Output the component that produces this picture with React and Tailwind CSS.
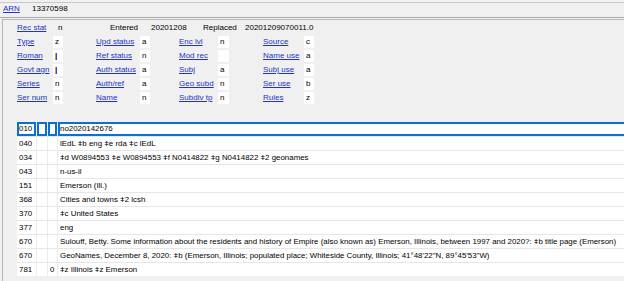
const font = { fontFamily: '"Liberation Sans", Arial, sans-serif' };

const fixedRows = [
  [["Type", "z", 36], ["Upd status", "a", 44], ["Enc lvl", "n", 39], ["Source", "c", 41]],
  [["Roman", "|", 36], ["Ref status", "n", 44], ["Mod rec", "", 39], ["Name use", "a", 41]],
  [["Govt agn", "|", 36], ["Auth status", "a", 44], ["Subj", "a", 39], ["Subj use", "a", 41]],
  [["Series", "n", 36], ["Auth/ref", "a", 44], ["Geo subd", "n", 39], ["Ser use", "b", 41]],
  [["Ser num", "n", 36], ["Name", "n", 44], ["Subdiv tp", "n", 39], ["Rules", "z", 41]],
];

const groupWidths = ["w-[79px]", "w-[83px]", "w-[84px]", "w-[60px]"];

const varFields = [
  ["040", "", "", "lEdL ǂb eng ǂe rda ǂc lEdL"],
  ["034", "", "", "ǂd W0894553 ǂe W0894553 ǂf N0414822 ǂg N0414822 ǂ2 geonames"],
  ["043", "", "", "n-us-il"],
  ["151", "", "", "Emerson (Ill.)"],
  ["368", "", "", "Cities and towns ǂ2 lcsh"],
  ["370", "", "", "ǂc United States"],
  ["377", "", "", "eng"],
  ["670", "", "", "Sulouff, Betty. Some information about the residents and history of Empire (also known as) Emerson, Illinois, between 1997 and 2020?: ǂb title page (Emerson)"],
  ["670", "", "", "GeoNames, December 8, 2020: ǂb (Emerson, Illinois; populated place; Whiteside County, Illinois; 41°48'22\"N, 89°45'53\"W)"],
  ["781", "", "0", "ǂz Illinois ǂz Emerson"],
];

const labelWidth = { 36: "w-[36px]", 44: "w-[44px]", 39: "w-[39px]", 41: "w-[41px]" };

function FieldLink({ children, w }) {
  return (
    <span className={`${w} shrink-0 text-[#2233cc] underline whitespace-nowrap`}>{children}</span>
  );
}

export default function App() {
  return (
    <div className="w-[624px] h-[281px] overflow-hidden bg-[#f0f0f0] text-[8px] leading-none text-black" style={font}>
      {/* ARN bar */}
      <div className="mt-[2px] h-[15px] border-t border-[#c8c8c8] flex items-center pl-[3px] pb-[2px]">
        <span className="text-[#2233cc] underline w-[29px]">ARN</span>
        <span>13370598</span>
      </div>
      <div className="border-t border-[#a8a8a8] h-[2px]" />
      <div className="border-t border-[#b8b8b8] border-l ml-[2px] h-[262px] pl-[14px] pt-[1px]">
        {/* fixed fields */}
        <div className="flex items-center h-[14px]">
          <FieldLink w="w-[36px]">Rec stat</FieldLink>
          <span className="w-[57px] pl-[5px]">n</span>
          <span className="w-[41px]">Entered</span>
          <span className="w-[52px]">20201208</span>
          <span className="w-[42px]">Replaced</span>
          <span>20201209070011.0</span>
        </div>
        {fixedRows.map((row, i) => (
          <div key={i} className="flex items-center h-[14px]">
            {row.map(([label, value, lw], j) => (
              <div key={j} className={`${groupWidths[j]} shrink-0 flex items-center`}>
                <FieldLink w={labelWidth[lw]}>{label}</FieldLink>
                <span className={`${j === 2 ? "w-[11px]" : "w-[10px]"} h-[12px] bg-white flex items-center pl-[2px] ${value === "|" ? "font-bold" : ""}`}>
                  {value}
                </span>
              </div>
            ))}
          </div>
        ))}

        {/* variable fields */}
        <div className="mt-[17px] flex flex-col gap-px bg-[#e6e6e6] text-[7.9px]">
          <div className="flex h-[14px] gap-px bg-[#f0f0f0]">
            <div className="w-[19px] shrink-0 bg-white border-2 border-[#0b6fd4] flex items-center">010</div>
            <div className="w-[10px] shrink-0 bg-white border-2 border-[#0b6fd4]" />
            <div className="w-[9px] shrink-0 bg-white border-2 border-[#0b6fd4]" />
            <div className="flex-1 bg-white border-2 border-r-0 border-[#0b6fd4] flex items-center">no2020142676</div>
          </div>
          {varFields.map(([tag, i1, i2, data], i) => (
            <div key={i} className="flex h-[13px] gap-px bg-[#ececec]">
              <div className="w-[19px] shrink-0 bg-white flex items-center pl-[2px]">{tag}</div>
              <div className="w-[10px] shrink-0 bg-white flex items-center pl-[2px]">{i1}</div>
              <div className="w-[9px] shrink-0 bg-white flex items-center pl-[2px]">{i2}</div>
              <div className="flex-1 bg-white flex items-center pl-[2px] whitespace-nowrap overflow-hidden">{data}</div>
            </div>
          ))}
        </div>
      </div>
    </div>
  );
}
